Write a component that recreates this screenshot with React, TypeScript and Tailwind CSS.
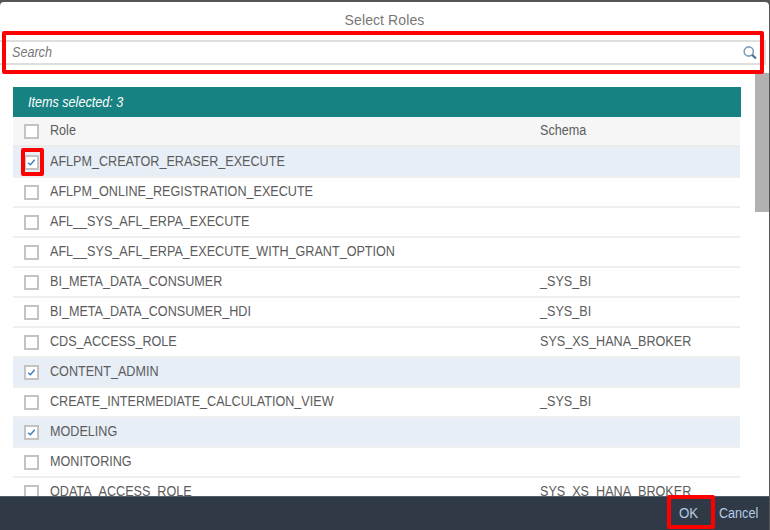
type Role = { name: string; schema?: string; checked?: boolean };

const roles: Role[] = [
  { name: "AFLPM_CREATOR_ERASER_EXECUTE", checked: true },
  { name: "AFLPM_ONLINE_REGISTRATION_EXECUTE" },
  { name: "AFL__SYS_AFL_ERPA_EXECUTE" },
  { name: "AFL__SYS_AFL_ERPA_EXECUTE_WITH_GRANT_OPTION" },
  { name: "BI_META_DATA_CONSUMER", schema: "_SYS_BI" },
  { name: "BI_META_DATA_CONSUMER_HDI", schema: "_SYS_BI" },
  { name: "CDS_ACCESS_ROLE", schema: "SYS_XS_HANA_BROKER" },
  { name: "CONTENT_ADMIN", checked: true },
  { name: "CREATE_INTERMEDIATE_CALCULATION_VIEW", schema: "_SYS_BI" },
  { name: "MODELING", checked: true },
  { name: "MONITORING" },
  { name: "ODATA_ACCESS_ROLE", schema: "SYS_XS_HANA_BROKER" },
];

function Checkbox({ checked = false }: { checked?: boolean }) {
  return (
    <span
      role="checkbox"
      aria-checked={checked}
      className="flex size-[15px] shrink-0 items-center justify-center border-2 border-[#c3c3c3] bg-white"
    >
      {checked && (
        <svg viewBox="0 0 9 9" className="size-[9px] shrink-0" fill="none" stroke="#3f80bd" strokeWidth="1.5">
          <path d="M1.1 4.8 3.4 6.8 7.7 1.7" />
        </svg>
      )}
    </span>
  );
}

function RoleRow({ role }: { role: Role }) {
  return (
    <div
      className={`flex h-[30px] shrink-0 items-start border-b-2 border-[#efefef] pl-[11px] first:h-[31px] first:pt-px ${role.checked ? "bg-[#e7eef6]" : "bg-white"}`}
    >
      <div className="relative mt-[7px]">
        <Checkbox checked={role.checked} />
        {role.name === roles[0].name && (
          <span className="absolute -top-[7px] -left-[3px] h-[28px] w-[23px] rounded-[2px] border-4 border-[#ff0000]" />
        )}
      </div>
      <span className="mt-[3px] ml-[11px] w-[490px] origin-left scale-x-90 leading-5">{role.name}</span>
      <span className="mt-[3px] origin-left scale-x-90 leading-5">{role.schema}</span>
    </div>
  );
}

export default function App() {
  return (
    <div className="h-[530px] w-[770px] overflow-hidden bg-[#555555] pt-0.5 font-['Liberation_Sans',Arial,sans-serif] text-[14px] text-[#5c5c5c]">
      <div className="flex h-[528px] w-[769px] flex-col overflow-hidden rounded-t-[4px] bg-white">
        <div className="flex h-[37px] shrink-0 items-center justify-center text-[#777777]">
          <h1 className="tracking-[0.1px]">Select Roles</h1>
        </div>
        <div className="relative mt-px mr-[3px] flex h-[25px] shrink-0 items-center justify-between border-2 border-l-0 border-[#dedede] pr-[7px] pl-3">
          <span className="origin-left scale-x-90 text-[#777777] italic">Search</span>
          <svg viewBox="0 0 14 14" className="size-[14px]" fill="none">
            <circle cx="5.8" cy="5.5" r="4.6" stroke="#7d9fbe" strokeWidth="1.6" />
            <path d="m9 8.7 4 3.8" stroke="#46709a" strokeWidth="2.2" />
          </svg>
          <span className="absolute -top-[11px] left-[2px] z-10 h-[43px] w-[762px] rounded-[2px] border-4 border-[#ff0000]" />
        </div>
        <div className="flex min-h-0 flex-1 justify-between overflow-hidden">
          <div className="flex w-[741px] flex-col overflow-hidden pt-[22px] pl-[13px]">
            <div className="flex h-[30px] shrink-0 items-center bg-[#178281] pl-[15px] text-white">
              <span className="origin-left scale-x-90 italic">Items selected: 3</span>
            </div>
            <div className="mr-px flex h-[30px] shrink-0 items-start border-b-2 border-[#ebebeb] bg-[#f6f6f6] pl-[11px]">
              <div className="mt-[7px]">
                <Checkbox />
              </div>
              <span className="mt-[3px] ml-[11px] w-[490px] origin-left scale-x-90 leading-5">Role</span>
              <span className="mt-[3px] origin-left scale-x-90 leading-5">Schema</span>
            </div>
            <div className="mr-px flex flex-col">
              {roles.map((role) => (
                <RoleRow key={role.name} role={role} />
              ))}
            </div>
          </div>
          <div className="mt-2 h-[139px] w-[14px] bg-[#b1b1b1]" />
        </div>
        <footer className="flex h-[34px] shrink-0 items-center justify-end border-t border-[#52606d] bg-[#2f3a46] pr-[11px] text-[#b3cbe5]">
          <button className="relative mr-[20px] w-5">
            <span className="block origin-left scale-x-95">OK</span>
            <span className="absolute -top-[8px] -left-[12px] h-[34px] w-[48px] rounded-[2px] border-4 border-[#ff0000]" />
          </button>
          <button className="w-[39px]">
            <span className="block origin-left scale-x-90">Cancel</span>
          </button>
        </footer>
      </div>
    </div>
  );
}
